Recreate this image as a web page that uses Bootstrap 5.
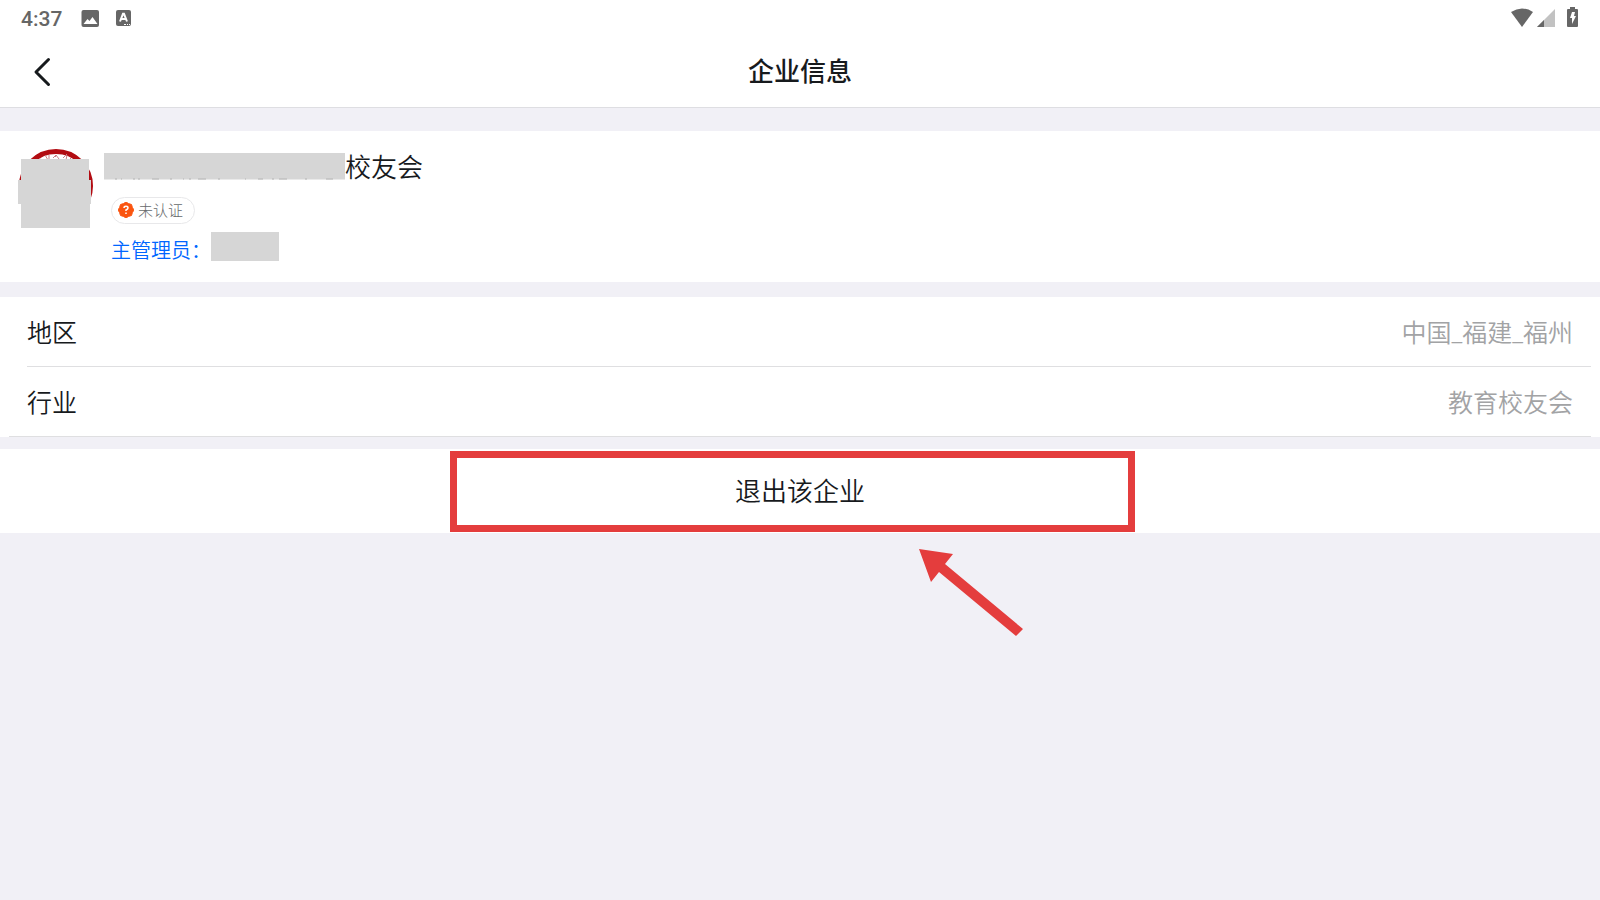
<!DOCTYPE html>
<html lang="zh-CN">
<head>
<meta charset="utf-8">
<meta name="viewport" content="width=device-width, initial-scale=1">
<title>企业信息</title>
<link href="https://cdn.jsdelivr.net/npm/bootstrap@5.3.0/dist/css/bootstrap.min.css" rel="stylesheet">
<style>
  body { background: #f1f0f6; color: #171a1d; font-family: "Noto Sans CJK SC", sans-serif; font-size: 25px; font-weight: 350; line-height: 36px; }
  .status-bar { height: 36px; padding: 0 20px; color: #666; }
  .clock { font: 500 21px/36px Roboto, sans-serif; padding: 1px 0 0 1px; }
  .title-bar { display: grid; grid-template-columns: 64px 1fr 64px; height: 72px; border-bottom: 1px solid #dedee2; }
  .title-bar h1 { font-size: 26px; font-weight: 500; line-height: 36px; padding-bottom: 4px; }
  .back-btn { padding: 1px 0 0 33px; }
  .org-panel { margin-top: 23px; height: 151px; padding: 17px 18px; }
  .org-logo { margin-top: 1px; }
  .org-info { margin-left: 11px; }
  .org-name { font-size: 26px; font-weight: 350; line-height: 36px; }
  .mask-block { background: #d6d6d6; }
  .cert-tag { margin: 13px 0 0 7px; width: 84px; height: 27px; border: 1px solid #e8e8ea; padding: 0 0 1px 6px; font-size: 15px; font-weight: 300; line-height: 24px; color: #66696b; }
  .admin-link { margin: 8px 0 0 7px; font-size: 20px; line-height: 36px; color: #0066ff; }
  .admin-mask { width: 68px; height: 29px; }
  .info-rows { margin-top: 15px; padding: 0 9px; }
  .info-row { height: 70px; border-bottom: 1px solid #dfdfe1; }
  .info-row dt, .info-row dd { font-weight: 350; }
  .info-row dd { font-family: Roboto, "Noto Sans CJK SC", sans-serif; color: #a2a3a5; padding: 5px 18px 0 0; }
  .info-row dt { padding: 0 0 2px 18px; }
  .info-row.inset-row { margin-left: 18px; }
  .info-row.inset-row dt { padding-left: 0; }
  .quit-panel { margin-top: 12px; height: 84px; }
  .quit-btn { font-size: 26px; font-weight: 350; line-height: 36px; color: #171a1d; padding: 0 0 2px; }
  .callout-box { left: 50%; top: 2px; width: 685px; height: 81px; margin-left: -350px; border: 7px solid #e43d3d; pointer-events: none; }
  .callout-arrow { margin: 15px 0 0 344px; }
</style>
</head>
<body class="min-vh-100">
<header class="bg-white">
  <div class="status-bar d-flex align-items-center justify-content-between">
    <div class="d-flex align-items-center">
      <span class="clock">4:37</span>
      <svg class="ms-3" width="22" height="20" viewBox="0 0 22 20" aria-hidden="true"><rect x="3.500" y="2" width="17.500" height="17" rx="2" fill="#666"/><path d="M5.500 16l4-5 2 2 3-4 5 7z" fill="#fff"/></svg>
      <svg class="ms-3" width="15" height="16" viewBox="0 0 15 16" aria-hidden="true"><rect width="15" height="16" rx="2" fill="#666"/><path d="M4 11.500 7 3.800h1l3 7.700M5 9h5" stroke="#fff" stroke-width="2" fill="none"/><path d="M8 14.500h2M11 14.500h1M13 14.500h1" stroke="#fff"/></svg>
    </div>
    <svg width="70" height="22" viewBox="0 0 70 22" aria-hidden="true">
      <path d="M1 5Q12-2 23 5L12 20z" fill="#666"/>
      <path d="M45 2v18H27z" fill="#c2c2c2"/><path d="M34 13v7h-7z" fill="#666"/>
      <path d="M60 0h5v2h2q1 0 1 1v16q0 1-1 1h-9q-1 0-1-1V3q0-1 1-1h2z" fill="#666"/><path d="M62 5h3l-1 4h2l-4 8v-6h-2z" fill="#fff"/>
    </svg>
  </div>
  <div class="title-bar align-items-center">
    <button type="button" class="btn btn-link back-btn border-0 rounded-0 text-start" aria-label="返回"><svg class="d-block" width="18" height="30" viewBox="0 0 18 30"><path d="M15.500 2.500 3 15l12.500 12.500" fill="none" stroke="#171a1d" stroke-width="3" stroke-linecap="round" stroke-linejoin="round"/></svg></button>
    <h1 class="m-0 text-center">企业信息</h1>
  </div>
</header>
<main>
  <section class="org-panel bg-white d-flex align-items-start">
    <svg class="org-logo flex-shrink-0" width="75" height="80" viewBox="0 0 75 80" aria-hidden="true">
      <circle cx="38" cy="37" r="34.500" fill="#fff" stroke="#b20c12" stroke-width="5"/>
      <path d="M27 6l3 5M31 6v4M35 9l3-3 3 4M39 6l-2 2M45 9l4-4M49 6l-1 5M22 10l4 2M52 9l3 3" stroke="#c98188" fill="none"/>
      <path d="M3 10h68v21h2v24h-1v24H3V55H0V31h3z" fill="#d6d6d6"/>
    </svg>
    <div class="org-info">
      <div class="org-name d-flex align-items-center">
        <svg width="241" height="27" viewBox="0 0 241 27" aria-hidden="true"><path fill="#d6d6d6" d="M0 0h241v26.500H0z"/><path d="M11 26h2M17 26h1M29 26h2M34 26h2M48 26h7M66 26h2M79 26h1M85 26h2M94 26h8M114 26h2M141 26h1M154 26h5M168 26h2M175 26h8M201 26h2M222 26h7" stroke="#b4b4b4"/></svg>
        <h2 class="org-name m-0">校友会</h2>
      </div>
      <div class="cert-tag d-flex align-items-center rounded-pill">
        <svg class="me-1" width="16" height="16" viewBox="0 0 16 16" aria-hidden="true"><path d="M8 0 10.500 1.600 13.500 2.500 14.400 5.500 16 8 14.400 10.500 13.500 13.500 10.500 14.400 8 16 5.500 14.400 2.500 13.500 1.600 10.500 0 8 1.600 5.500 2.500 2.500 5.500 1.600z" fill="#fa5510" stroke="#fa5510" stroke-linejoin="round"/><path d="M6 6q0-1.700 2-1.700t2 1.700q0 1-2 2v1M8 10.500v1.500" stroke="#fff" stroke-width="1.500" fill="none"/></svg>
        <span>未认证</span>
      </div>
      <div class="d-flex align-items-start">
        <a href="#" class="admin-link text-decoration-none">主管理员：</a>
        <span class="mask-block admin-mask mt-2"></span>
      </div>
    </div>
  </section>
  <dl class="info-rows bg-white mb-0">
    <div class="info-row inset-row d-flex align-items-center justify-content-between"><dt>地区</dt><dd class="m-0">中国_福建_福州</dd></div>
    <div class="info-row d-flex align-items-center justify-content-between"><dt>行业</dt><dd class="m-0">教育校友会</dd></div>
  </dl>
  <section class="quit-panel bg-white position-relative">
    <button type="button" class="quit-btn btn w-100 h-100 border-0 rounded-0">退出该企业</button>
    <div class="callout-box position-absolute"></div>
  </section>
  <div class="d-flex justify-content-center">
    <svg class="callout-arrow" width="108" height="90" viewBox="0 0 108 90" aria-hidden="true"><path d="M1 1 35 6 27 16 105 81 98 88 21 24 13 34z" fill="#e43d3d"/></svg>
  </div>
</main>
<script src="https://cdn.jsdelivr.net/npm/bootstrap@5.3.0/dist/js/bootstrap.bundle.min.js"></script>
</body>
</html>
